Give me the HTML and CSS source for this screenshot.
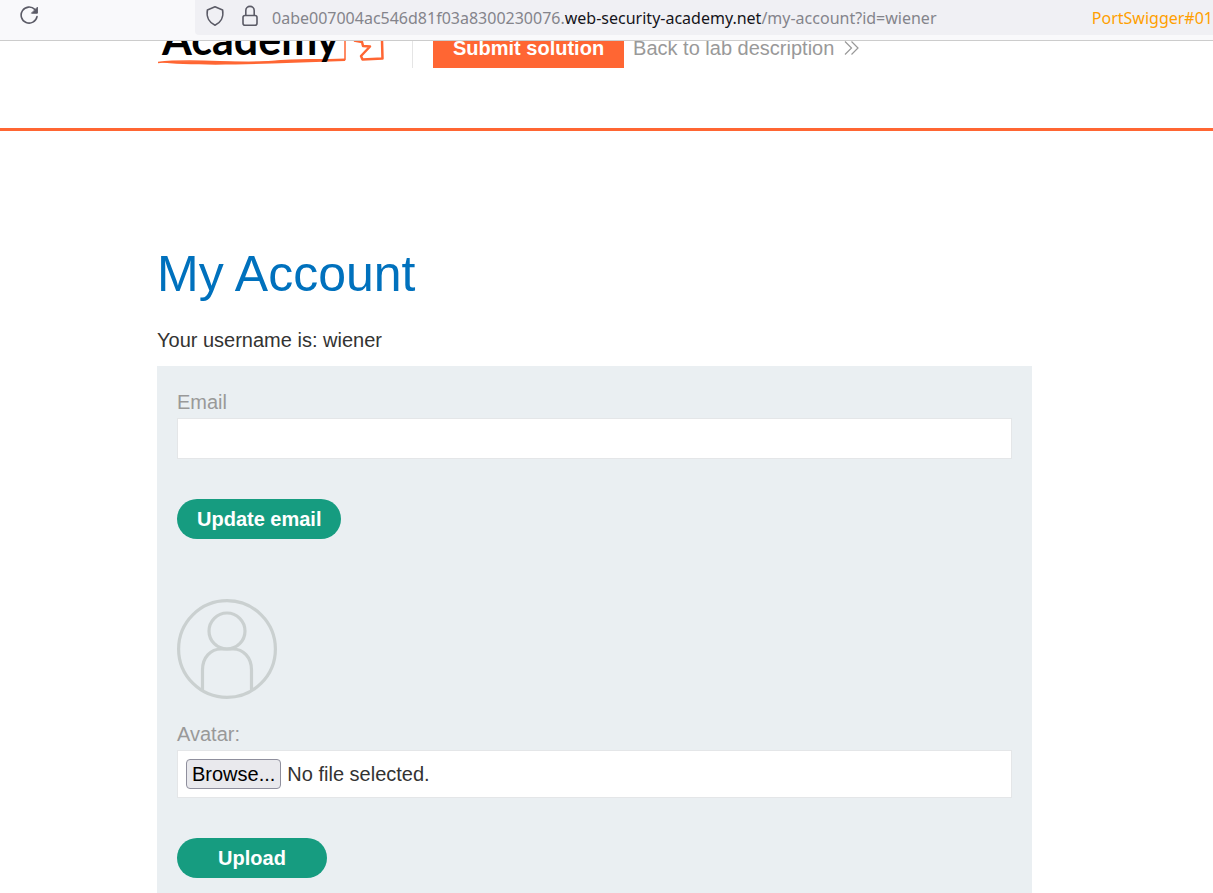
FILE: index.html
```html
<!DOCTYPE html>
<html lang="en">
<head>
<meta charset="utf-8">
<meta name="viewport" content="width=device-width, initial-scale=1">
<title>My Account</title>
<link rel="stylesheet" href="styles.css">
</head>
<body>
<div class="toolbar">
  <button class="reload" type="button" aria-label="Reload">
    <svg width="20" height="20" viewBox="0 0 20 20" fill="none" stroke="#5b5b66" stroke-width="1.6" stroke-linecap="round"><path d="M14.8 3.4A8 8 0 1 0 17 10.6"/><path d="M17.4 1.6v5.6h-5.6z" fill="#5b5b66" stroke-width="1" stroke-linejoin="round"/></svg>
  </button>
  <div class="urlbar">
    <svg class="shield" width="20" height="22" viewBox="0 0 20 22" fill="none" stroke="#5b5b66" stroke-width="1.6" stroke-linejoin="round"><path d="M10 1.8 17.6 4.9C18.9 12 15.6 17.7 10 20.2 4.400 17.700 1.100 12 2.400 4.900z"/></svg>
    <svg class="lock" width="18" height="22" viewBox="0 0 18 22" fill="none" stroke="#5b5b66" stroke-width="1.600"><rect x="2" y="10.500" width="14" height="9.700" rx="2"/><path d="M4.800 10.500V5.600a4.200 4.200 0 0 1 8.400 0v4.900"/></svg>
    <span class="url">0abe007004ac546d81f03a8300230076.<span class="domain">web-security-academy.net</span>/my-account?id=wiener</span>
    <span class="container-name">PortSwigger#01</span>
  </div>
</div>
<header class="lab-header">
  <div class="lab-row">
    <svg class="logo" width="230" height="64" viewBox="0 0 230 64" role="img" aria-label="Academy">
      <path d="M1 58.500C40 54 80 61 115 57.500S165 57 188 55.500V24" fill="none" stroke="#ff6633" stroke-width="1.500"/>
      <path d="M2 58C45 55.500 90 59.500 125 56.500L188 54.500V57L115 59.500C75 61 25 61.500 2 58z" fill="#ff6633"/>
      <path d="M197 36.500 205 38 206 42 213 42.500 204 52 205.500 55.500 225.500 54.500 225 36" fill="none" stroke="#ff6633" stroke-width="2.500" stroke-linejoin="round"/>
      <text class="logo-text" x="5" y="51">Academy</text>
    </svg>
    <div class="lab-actions">
      <button class="submit" type="button">Submit solution</button>
      <a class="back" href="#">Back to lab description
        <svg width="15" height="14" viewBox="0 0 15 14" fill="none" stroke="#999" stroke-width="1.200"><path d="M1 .5 7.500 7 1 13.500M7.500.5 14 7 7.500 13.500"/></svg>
      </a>
    </div>
  </div>
</header>
<main class="content">
  <h1>My Account</h1>
  <p class="username">Your username is: wiener</p>
  <div class="panel">
    <form class="form">
      <label for="email">Email</label>
      <input class="field" id="email" type="email">
      <button class="pill" type="submit">Update email</button>
    </form>
    <form class="form avatar-form">
      <svg class="avatar" width="100" height="100" viewBox="0 0 100 100" fill="none" stroke="#cad0d0" stroke-width="3.200"><circle cx="50" cy="50" r="48.400"/><circle cx="50" cy="32" r="18"/><path d="M25.500 91V71C25.500 58 34 50 44 50H56C66 50 74.500 58 74.500 71V91"/></svg>
      <label for="avatar">Avatar:</label>
      <div class="field file-field">
        <span class="browse" aria-hidden="true">Browse...</span>
        <span aria-hidden="true">No file selected.</span>
        <input class="file-input" id="avatar" type="file">
      </div>
      <button class="pill" type="submit">Upload</button>
    </form>
  </div>
</main>
</body>
</html>
```
FILE: styles.css
```css
* {
  box-sizing: border-box;
}

body {
  display: flex;
  flex-direction: column;
  height: 100vh;
  margin: 0;
  overflow: hidden;
  background: #fff;
  color: #333332;
  font: 20px/24px "Liberation Sans", Arial, sans-serif;
}

button,
input {
  font: inherit;
}

svg {
  display: block;
  flex: none;
}

.toolbar {
  display: flex;
  flex: none;
  justify-content: space-between;
  height: 41px;
  border-bottom: 1px solid #ccc;
  background: #f9f9fb;
}

.reload {
  align-self: flex-start;
  margin: 6px 0 0 20px;
  padding: 0;
  border: 0;
  background: none;
}

.urlbar {
  display: flex;
  flex: 1;
  align-items: center;
  height: 35px;
  margin-left: 155px;
  padding-left: 10px;
  border-bottom-left-radius: 4px;
  background: #f0f0f4;
  color: #84848b;
  font: 16px/24px "Noto Sans", "Open Sans", sans-serif;
  white-space: nowrap;
}

.shield {
  margin: 0 16px 4px 0;
}

.lock {
  margin: 0 13px 4px 0;
}

.domain {
  color: #15141a;
}

.container-name {
  margin-left: auto;
  color: #ff9f00;
}

.lab-header {
  flex: none;
  padding: 0 181px 60px 157px;
  border-bottom: 3px solid #ff6633;
}

.lab-row {
  display: flex;
  align-items: flex-end;
  height: 27px;
  overflow: hidden;
}

.logo-text {
  fill: #000;
  font: bold 43px Lato, sans-serif;
}

.lab-actions {
  display: flex;
  align-items: center;
  gap: 9px;
  margin-left: 25px;
  padding-left: 20px;
  border-left: 1px solid #e5e5e5;
}

.submit {
  height: 40px;
  padding: 0 20px;
  border: 0;
  background: #ff6633;
  color: #fff;
  font-weight: bold;
}

.back {
  display: flex;
  align-items: center;
  gap: 10px;
  color: #999;
  text-decoration: none;
  white-space: nowrap;
}

.content {
  display: flex;
  flex: 1;
  flex-direction: column;
  min-height: 0;
  padding: 113px 181px 0 157px;
}

h1 {
  margin: 0;
  color: #0071bd;
  font-size: 50px;
  font-weight: normal;
  line-height: 60px;
}

.username {
  margin: 24px 0 14px;
}

.panel {
  flex: 1;
  padding: 24px 20px 0;
  background: #eaeff2;
}

.form {
  display: flex;
  flex-direction: column;
  align-items: flex-start;
}

.form label {
  margin-bottom: 4px;
  color: #999;
}

.field {
  width: 100%;
  height: 41px;
  margin-bottom: 40px;
  padding: 0 8px;
  border: 1px solid #e4e6e8;
  background: #fff;
}

.pill {
  min-width: 150px;
  height: 40px;
  padding: 0 20px;
  border: 0;
  border-radius: 20px;
  background: #169c80;
  color: #fff;
  font-weight: bold;
}

.avatar-form {
  margin-top: 60px;
}

.avatar {
  margin-bottom: 23px;
}

.file-field {
  position: relative;
  display: flex;
  align-items: center;
  gap: 6px;
  height: 48px;
}

.browse {
  padding: 2px 5px;
  border: 1px solid #8f8f9d;
  border-radius: 4px;
  background: #e9e9ed;
  color: #000;
}

.file-input {
  position: absolute;
  inset: 0;
  width: 100%;
  opacity: 0;
}
```
